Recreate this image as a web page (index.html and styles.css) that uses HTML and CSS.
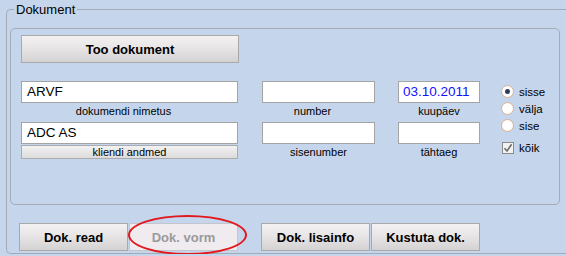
FILE: index.html
```html
<!DOCTYPE html>
<html>
<head>
<meta charset="utf-8">
<link rel="stylesheet" href="styles.css">
</head>
<body>
<fieldset class="outer">
  <legend class="legend">Dokument</legend>
  <div class="panel">
    <button class="btn btn-big">Too dokument</button>
    <div class="form">
      <div class="col col1">
        <div class="input">ARVF</div>
        <div class="label label-shift">dokumendi nimetus</div>
        <div class="input">ADC AS</div>
        <button class="btn-small">kliendi andmed</button>
      </div>
      <div class="col col2">
        <div class="input"></div>
        <div class="label label-shift">number</div>
        <div class="input"></div>
        <div class="label">sisenumber</div>
      </div>
      <div class="col col3">
        <div class="input input-date">03.10.2011</div>
        <div class="label">kuupäev</div>
        <div class="input"></div>
        <div class="label">tähtaeg</div>
      </div>
      <div class="col col4">
        <div class="opt"><span class="radio checked"></span>sisse</div>
        <div class="opt"><span class="radio"></span>välja</div>
        <div class="opt"><span class="radio"></span>sise</div>
        <div class="opt opt-check"><span class="check"><svg width="10" height="10" viewBox="0 0 10 10"><path d="M1.5 5.2 L4 8 L8.6 1.2" fill="none" stroke="#6d6d6d" stroke-width="1.6"/></svg></span>kõik</div>
      </div>
    </div>
  </div>
  <div class="actions">
    <button class="btn btn-act">Dok. read</button>
    <div class="vorm-wrap">
      <button class="btn btn-act btn-disabled">Dok. vorm</button>
      <span class="ring"></span>
    </div>
    <button class="btn btn-act btn-gap">Dok. lisainfo</button>
    <button class="btn btn-act btn-last">Kustuta dok.</button>
  </div>
</fieldset>
</body>
</html>
```

FILE: styles.css
```css
html, body {
  margin: 0;
  padding: 0;
  overflow: hidden;
  background: #c5d5ec;
  font-family: "Liberation Sans", Arial, sans-serif;
  color: #000;
}

.outer {
  margin: 2px 0 0 6px;
  padding: 11px 0 2px 3px;
  border: 1px solid #a3abb7;
  border-right: none;
  border-radius: 5px 0 0 5px;
  width: 560px;
  box-sizing: border-box;
  min-width: 0;
}

.legend {
  font-size: 13px;
  line-height: 15px;
  padding: 0 2px;
  margin-left: 4px;
}

.panel {
  box-sizing: border-box;
  width: 550px;
  height: 177px;
  border: 1px solid #a3abb7;
  border-radius: 5px;
  padding: 6px 10px 0 10px;
}

.btn {
  font-family: "Liberation Sans", Arial, sans-serif;
  font-weight: bold;
  font-size: 13px;
  color: #000;
  border: 1px solid #a9a9a9;
  background: linear-gradient(#f3f1f1, #e6e4e4 50%, #d3d1d1);
  padding: 0;
  margin: 0;
  box-sizing: border-box;
  display: block;
}

.btn-big {
  width: 218px;
  height: 28px;
}

.form {
  display: flex;
  margin-top: 18px;
}

.col {
  display: flex;
  flex-direction: column;
}

.col1 { width: 217px; }
.col2 { width: 113px; margin-left: 24px; }
.col3 { width: 82px; margin-left: 23px; }
.col4 { margin-left: 21px; padding-top: 2px; }

.input {
  box-sizing: border-box;
  height: 22px;
  background: #fff;
  border: 1px solid #a4a4a4;
  font-size: 13.5px;
  line-height: 20px;
  padding-left: 5px;
}

.input-date {
  color: #1212ff;
  padding-left: 4px;
}

.label {
  font-size: 11px;
  line-height: 17px;
  height: 19px;
  text-align: center;
}

.label-shift {
  padding-right: 12px;
}

.btn-small {
  margin-top: 1px;
  box-sizing: border-box;
  height: 14px;
  padding: 0;
  border: 1px solid #ababab;
  background: linear-gradient(#f2f2f2, #dcdcdc);
  font-family: "Liberation Sans", Arial, sans-serif;
  font-size: 11px;
  line-height: 11px;
  color: #000;
}

.opt {
  display: flex;
  align-items: center;
  height: 17px;
  font-size: 11.5px;
}

.opt-check {
  margin-top: 5px;
}

.radio {
  box-sizing: border-box;
  width: 13px;
  height: 13px;
  border-radius: 50%;
  border: 1px solid #d9b49c;
  background: radial-gradient(circle at 50% 50%, #fff 55%, #f3ece8);
  margin-right: 5px;
  display: flex;
  align-items: center;
  justify-content: center;
}

.radio.checked::after {
  content: "";
  width: 5px;
  height: 5px;
  border-radius: 50%;
  background: #2e3c5a;
}

.check {
  box-sizing: border-box;
  width: 12px;
  height: 12px;
  border: 1px solid #8c8c8c;
  background: #f2f2f2;
  margin-left: 1px;
  margin-right: 5px;
  display: flex;
  align-items: center;
  justify-content: center;
}

.actions {
  display: flex;
  margin-top: 18px;
  margin-left: 9px;
}

.btn-act {
  width: 109px;
  height: 28px;
}

.vorm-wrap {
  position: relative;
  margin-left: 1px;
}

.btn-disabled {
  background: #efebef;
  border-color: #c3c6cf;
  color: #9a9a9a;
}

.ring {
  position: absolute;
  left: -1px;
  top: -8px;
  width: 119px;
  height: 40px;
  box-sizing: border-box;
  border: 2px solid #e2191c;
  border-radius: 50%;
}

.btn-gap {
  margin-left: 23px;
}

.btn-last {
  margin-left: 1px;
}
```
